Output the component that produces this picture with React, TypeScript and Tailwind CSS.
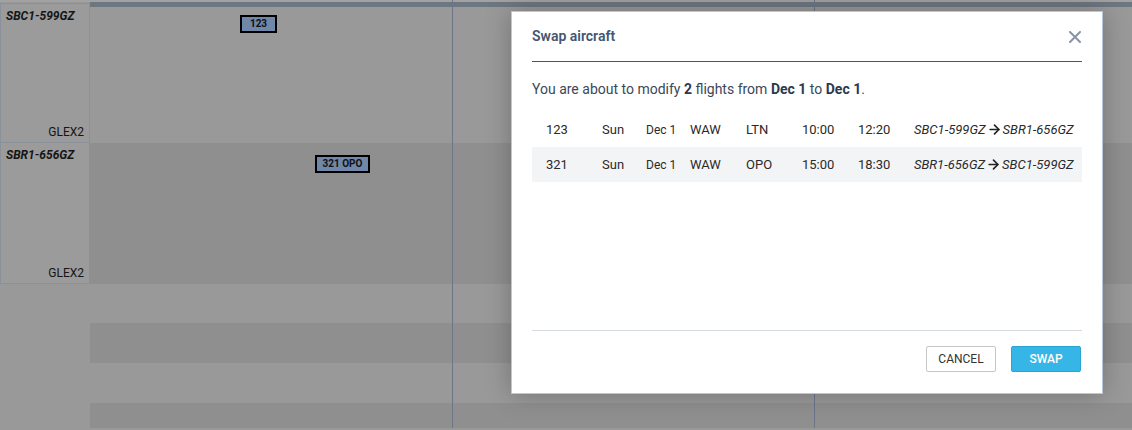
import { ArrowRight } from "lucide-react";

interface Flight {
  id: string;
  day: string;
  date: string;
  from: string;
  to: string;
  dep: string;
  arr: string;
  oldReg: string;
  newReg: string;
}

const flights: Flight[] = [
  { id: "123", day: "Sun", date: "Dec 1", from: "WAW", to: "LTN", dep: "10:00", arr: "12:20", oldReg: "SBC1-599GZ", newReg: "SBR1-656GZ" },
  { id: "321", day: "Sun", date: "Dec 1", from: "WAW", to: "OPO", dep: "15:00", arr: "18:30", oldReg: "SBR1-656GZ", newReg: "SBC1-599GZ" },
];

function AircraftCell({ reg, type, className }: { reg: string; type: string; className: string }) {
  return (
    <div className={`flex flex-col justify-between border border-[#8b919a] bg-[#9b9b9b] px-[5px] pt-[5px] pb-[2px] ${className}`}>
      <div className="text-[12px] font-bold italic leading-[15px] text-[#151515]">{reg}</div>
      <div className="text-right text-[12px] leading-[15px] text-[#151515]">{type}</div>
    </div>
  );
}

function FlightBox({ label, className }: { label: string; className: string }) {
  return (
    <div
      className={`absolute flex items-center justify-center border-2 border-black bg-[#6f87a8] text-[10px] font-bold leading-none text-[#111] ${className}`}
    >
      {label}
    </div>
  );
}

function SwapModal() {
  return (
    <div className="absolute left-[511px] top-[11px] flex h-[383px] w-[592px] flex-col border border-[#b9c7da] bg-white px-[20px] shadow-[0_0_24px_rgba(0,0,0,0.25)]">
      <div className="flex items-center justify-between border-b border-[#4a5568] pt-[16px] pb-[17px]">
        <h2 className="text-[14px] font-semibold leading-[16px] text-[#44566f]">Swap aircraft</h2>
        <svg width="12" height="12" viewBox="0 0 12 12" className="mr-[1px] mt-[1px]">
          <path d="M1 1L11 11M11 1L1 11" stroke="#8a94a4" strokeWidth="2" strokeLinecap="round" />
        </svg>
      </div>

      <div className="flex-1">
        <p className="mt-[17px] text-[14px] leading-[20px] text-[#3c4758]">
          You are about to modify <span className="font-bold text-[#2d3a4d]">2</span> flights from{" "}
          <span className="font-bold text-[#2d3a4d]">Dec 1</span> to{" "}
          <span className="font-bold text-[#2d3a4d]">Dec 1</span>.
        </p>

        <div className="mt-[13px]">
          {flights.map((f, i) => (
            <div
              key={f.id}
              className={`flex h-[35px] items-center text-[13px] text-[#2a2a2a] ${i % 2 === 1 ? "bg-[#f3f4f6]" : ""}`}
            >
              <div className="w-[70px] pl-[14px]">{f.id}</div>
              <div className="w-[44px]">{f.day}</div>
              <div className="w-[44px] text-[12px]">{f.date}</div>
              <div className="w-[56px]">{f.from}</div>
              <div className="w-[56px]">{f.to}</div>
              <div className="w-[56px]">{f.dep}</div>
              <div className="w-[56px]">{f.arr}</div>
              <div className="flex items-center italic">
                <span>{f.oldReg}</span>
                <ArrowRight size={15} strokeWidth={2.6} className="mx-[1px] text-[#222]" />
                <span>{f.newReg}</span>
              </div>
            </div>
          ))}
        </div>
      </div>

      <div className="flex justify-end gap-[15px] border-t border-[#d5d9e0] pt-[15px] pb-[21px]">
        <button className="h-[26px] w-[70px] rounded-[2px] border border-[#c6c6c6] bg-white text-[12px] text-[#333]">
          CANCEL
        </button>
        <button className="mr-[1px] h-[26px] w-[70px] rounded-[2px] border border-[#2aa4d5] bg-[#36b6e7] text-[12px] font-medium text-white">
          SWAP
        </button>
      </div>
    </div>
  );
}

export default function App() {
  return (
    <div
      className="relative h-[430px] w-[1132px] overflow-hidden bg-[#999999]"
      style={{ fontFamily: "Roboto, 'Liberation Sans', sans-serif" }}
    >
      <div className="h-[2px] bg-[#a2a2a2]" />
      <div className="flex">
        <div className="flex w-[90px] flex-col pt-[1px]">
          <AircraftCell reg="SBC1-599GZ" type="GLEX2" className="h-[140px]" />
          <AircraftCell reg="SBR1-656GZ" type="GLEX2" className="h-[141px] border-t-0" />
        </div>

        <div className="relative flex-1">
          <div className="h-[5px] bg-[#6e7681]" />
          <div className="h-[136px] bg-[#999999]" />
          <div className="h-[141px] bg-[#8f8f8f]" />
          <div className="h-[39px] bg-[#999999]" />
          <div className="h-[40px] bg-[#8f8f8f]" />
          <div className="h-[40px] bg-[#999999]" />
          <div className="h-[25px] bg-[#8f8f8f]" />

          <div className="absolute left-[362px] top-[-2px] h-[428px] w-px bg-[#6b7689]" />
          <div className="absolute left-[724px] top-[-2px] h-[428px] w-px bg-[#6b7689]" />

          <FlightBox label="123" className="left-[150px] top-[13px] h-[18px] w-[37px]" />
          <FlightBox label="321 OPO" className="left-[225px] top-[153px] h-[18px] w-[55px]" />
        </div>
      </div>

      <SwapModal />
    </div>
  );
}
